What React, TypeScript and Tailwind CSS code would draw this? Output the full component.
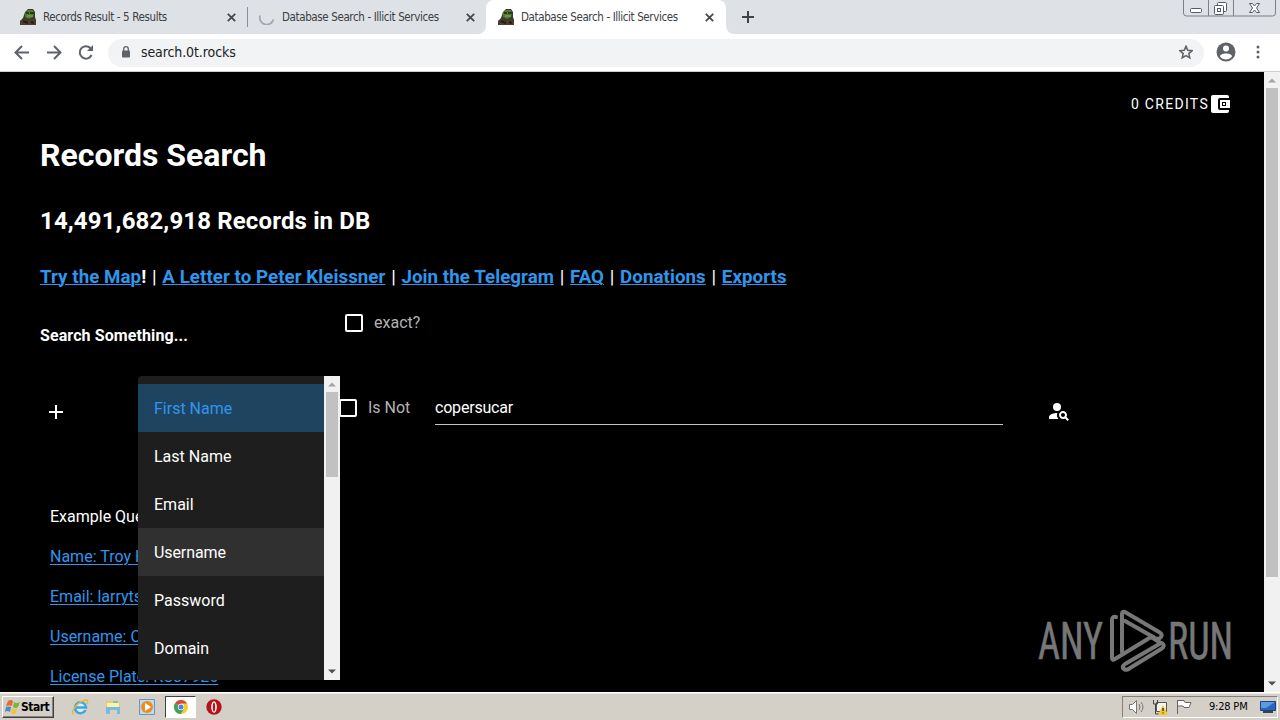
import type { ReactNode } from "react";

const UI_FONT = "font-['DejaVu_Sans_Condensed','DejaVu_Sans',sans-serif] [font-stretch:condensed]";

const NAV_LINKS = ["A Letter to Peter Kleissner", "Join the Telegram", "FAQ", "Donations", "Exports"];
const FIELDS = ["First Name", "Last Name", "Email", "Username", "Password", "Domain"];
const EXAMPLES = ["Name: Troy Hunt", "Email: larrytsantos", "Username: Chris", "License Plate: KCJ7926"];

function FrogIcon() {
	return (
		<svg className="w-4 h-4 shrink-0" viewBox="0 0 16 16">
			<path d="M0 16V12L3 9 5 3 8 0h5l2 3v5l1 3v5z" fill="#3b3a28" />
			<path d="M5 4 8 1h5l1 3-1 4-4 2-4-2z" fill="#4d7a35" />
			<path d="M6 4h3M10 4h4" stroke="#16270f" strokeWidth="1.4" />
			<path d="M7 7h6" stroke="#98a94e" />
			<path d="M0 16v-4l4-2 4 2 5-2 3 3v3z" fill="#513c29" />
			<path d="M3 12l5 2M11 13l3 1" stroke="#1d211b" strokeWidth="2" />
		</svg>
	);
}

function CloseIcon() {
	return (
		<svg className="w-[9px] h-[9px] shrink-0" viewBox="0 0 9 9">
			<path d="M.8.8 8.2 8.2M8.2.8.8 8.2" stroke="#45494d" strokeWidth="1.8" />
		</svg>
	);
}

function Tab({ title, icon, active }: { title: string; icon: ReactNode; active?: boolean }) {
	return (
		<div
			className={
				active
					? "relative w-[240px] h-[34px] flex items-center pl-3 pr-[12px] bg-white rounded-t-lg"
					: "w-[239px] h-[34px] flex items-center pl-3 pr-[11px]"
			}
		>
			{active && (
				<>
					<svg className="absolute -left-2 bottom-0 w-2 h-2" viewBox="0 0 8 8"><path d="M8 0v8H0a8 8 0 0 0 8-8" fill="#fff" /></svg>
					<svg className="absolute -right-2 bottom-0 w-2 h-2" viewBox="0 0 8 8"><path d="M0 0v8h8a8 8 0 0 1-8-8" fill="#fff" /></svg>
				</>
			)}
			{icon}
			<span className="ml-[7px] pt-0.5 flex-1 whitespace-nowrap text-[11.5px] tracking-[-0.38px] text-[#3c4043]">{title}</span>
			<CloseIcon />
		</div>
	);
}

function WindowButtons() {
	return (
		<svg className="w-[94px] h-[18px]" viewBox="0 0 94 18" fill="none">
			<path d="M.5 0v13q0 3 3 3h86q3 0 3-3V0M25.500 0v16M50.500 0v16" stroke="#7c8088" />
			<rect x="7.500" y="8.500" width="11" height="4" rx="1" fill="#fff" stroke="#555b66" />
			<rect x="34.500" y="2.500" width="9" height="9" rx="1" fill="#fff" stroke="#555b66" />
			<rect x="31.500" y="5.500" width="9" height="9" rx="1" fill="#fff" stroke="#555b66" />
			<rect x="34.500" y="8.500" width="3" height="3" stroke="#555b66" />
			<path d="M66.500 3.500h3l2 2.500 2-2.500h3l-3 4.500 3 4.500h-3l-2-2.500-2 2.500h-3l3-4.500z" fill="#fff" stroke="#555b66" />
		</svg>
	);
}

function TabStrip() {
	return (
		<div className="h-[34px] flex bg-[#dee1e6]">
			<div className="flex pl-2 items-start">
				<Tab title="Records Result - 5 Results" icon={<FrogIcon />} />
				<div className="w-px h-5 mt-[7px] bg-[#8b8f95] -mr-px" />
				<Tab
					title="Database Search - Illicit Services"
					icon={
						<svg className="w-4 h-4 shrink-0" viewBox="0 0 16 16" fill="none">
							<path d="M1 6.500a7 7 0 0 0 13.500 4" stroke="#a3a7ad" strokeWidth="1.800" />
						</svg>
					}
				/>
				<Tab title="Database Search - Illicit Services" icon={<FrogIcon />} active />
			</div>
			<svg className="w-3 h-3 mt-[11px] ml-4" viewBox="0 0 12 12">
				<path d="M6 0v12M0 6h12" stroke="#3f4347" strokeWidth="2" />
			</svg>
			<div className="flex-1" />
			<div className="w-[97px]">
				<WindowButtons />
			</div>
		</div>
	);
}

function Toolbar() {
	return (
		<div className="h-[38px] flex items-center bg-white border-b border-[#c9cccf] pl-[14px] text-[#5f6368]">
			<svg className="w-4 h-4" viewBox="0 0 16 16" fill="none" stroke="currentColor" strokeWidth="2">
				<path d="M15 7.500H2M8 1 1.500 7.500 8 14" />
			</svg>
			<svg className="w-4 h-4 ml-4" viewBox="0 0 16 16" fill="none" stroke="currentColor" strokeWidth="2">
				<path d="M1 7.500h13M8 1 14.500 7.500 8 14" />
			</svg>
			<svg className="w-4 h-4 ml-4" viewBox="0 0 16 16" fill="none" stroke="currentColor" strokeWidth="2">
				<path d="M13.600 10A6.200 6.200 0 1 1 12.500 3.200L14 5" />
				<path d="M15 0v6H9z" fill="currentColor" stroke="none" />
			</svg>
			<div className="ml-[14px] w-[1096px] h-7 rounded-full bg-[#f1f3f4] flex items-center pl-[13px] pr-[11px]">
				<svg className="w-[10px] h-3 -mt-0.5" viewBox="0 0 10 12">
					<rect x="1" y="4.500" width="8" height="7" rx="1" fill="currentColor" />
					<path d="M2.700 5V3a2.300 2.300 0 0 1 4.600 0v2" fill="none" stroke="currentColor" strokeWidth="1.300" />
				</svg>
				<span className="ml-[10px] flex-1 text-[14px] tracking-[-0.1px] text-[#202124]">search.0t.rocks</span>
				<svg className="w-[14px] h-[14px] -mt-0.5" viewBox="0 0 24 24" fill="none" stroke="currentColor" strokeWidth="2.600">
					<path d="m12 2 3 7 7.500.7-5.700 5 1.700 7.300-6.500-3.900L5.500 22l1.700-7.300-5.700-5L9 9z" />
				</svg>
			</div>
			<svg className="w-[20px] h-[20px] ml-3 -mt-0.5" viewBox="0 0 20 20">
				<circle cx="10" cy="10" r="9.500" fill="currentColor" />
				<circle cx="10" cy="6.500" r="3" fill="#fff" />
				<path d="M4 14.500c0-4 12-4 12 0-3 4-9 4-12 0" fill="#fff" />
			</svg>
			<svg className="w-4 h-4 ml-[14px] -mt-0.5" viewBox="0 0 16 16" fill="currentColor">
				<circle cx="8" cy="3" r="1.500" />
				<circle cx="8" cy="8" r="1.500" />
				<circle cx="8" cy="13" r="1.500" />
			</svg>
		</div>
	);
}

function ScrollArrow({ down }: { down?: boolean }) {
	return (
		<svg className="w-4 h-4 shrink-0" viewBox="0 0 16 16">
			{down ? <path d="M4 5.500h8l-4 4z" fill="#505050" /> : <path d="M4 10.500h8l-4-4z" fill="#a3a3a3" />}
		</svg>
	);
}

function FieldMenu() {
	return (
		<div className="absolute left-[138px] top-[304px] w-[202px] h-[304px] flex bg-[#1e1e1e] rounded-tl overflow-hidden">
			<div className="flex-1 pt-2">
				{FIELDS.map((field) => (
					<div
						key={field}
						className={
							field === "First Name"
								? "h-12 flex items-center pl-4 pt-px text-base bg-[#1f4460] text-[#2f96ed]"
								: field === "Username"
									? "h-12 flex items-center pl-4 pt-px text-base tracking-[-0.1px] bg-[#303030]"
									: "h-12 flex items-center pl-4 pt-px text-base"
						}
					>
						{field}
					</div>
				))}
			</div>
			<div className="w-4 flex flex-col bg-[#f1f1f1]">
				<ScrollArrow />
				<div className="h-[85px] mx-0.5 bg-[#c1c1c1]" />
				<div className="flex-1" />
				<ScrollArrow down />
			</div>
		</div>
	);
}

function Checkbox() {
	return <div className="w-[18px] h-[18px] border-2 border-white rounded-[2px]" />;
}

function Watermark() {
	return (
		<svg className="absolute left-[1036px] top-[534px] w-[200px] h-[70px]" viewBox="0 0 200 70" fill="none">
			<g fill="#777" stroke="#777" strokeWidth=".6" className="font-[Roboto,sans-serif] [font-stretch:condensed]" fontSize="52">
				<text x="2" y="53" textLength="65" lengthAdjust="spacingAndGlyphs">ANY</text>
				<text x="132" y="53" textLength="65" lengthAdjust="spacingAndGlyphs">RUN</text>
			</g>
			<g stroke="#777" strokeWidth="4" strokeLinejoin="round" strokeLinecap="round">
				<path d="M86 46V8q0-3 3-2l34 20q4 2 2 5t-6 1L89 15" />
				<path d="M80 11q-4-1-4 3v38q0 3 3 1l36-22" />
				<path d="M115 31l10 6-36 21q-4 3-1 5t6-1l31-19q5-3 1-6" />
			</g>
		</svg>
	);
}

function Page() {
	return (
		<div className="relative h-[620px] flex bg-black text-white font-[Roboto,sans-serif] [font-stretch:normal] overflow-hidden">
			<main className="w-[1264px] pl-10">
				<div className="h-[62px] pt-6 pr-[33px] flex justify-end">
					<div className="h-4 flex items-center text-[14px] tracking-[1.3px]">
						0 CREDITS
						<svg className="w-5 h-[18px] ml-[2px]" viewBox="0 0 20 18">
							<path d="M2 0h14q2 0 2 2v14q0 2-2 2H2q-2 0-2-2V2q0-2 2-2" fill="#fff" />
							<path d="M20 3H9Q7 3 7 5v8q0 2 2 2h11" fill="#000" />
							<path d="M9 5h10v8H9z" fill="#fff" />
							<path d="M11 7h4v4h-4z" fill="#000" />
							<path d="M12 8h2v2h-2z" fill="#fff" />
						</svg>
					</div>
				</div>
				<h1 className="h-[42px] leading-[42px] text-[32px] font-bold">Records Search</h1>
				<h2 className="mt-[29px] h-8 leading-8 text-2xl tracking-[0.14px] font-bold">14,491,682,918 Records in DB</h2>
				<div className="mt-6 h-8 flex items-center text-[18.72px] tracking-[0.06px] leading-8 whitespace-pre">
					<a className="font-bold text-[#2f96ed] underline decoration-1 underline-offset-1">Try the Map</a>
					<b>!</b>
					{NAV_LINKS.map((link) => (
						<span key={link}>
							<span className="mx-px">{" | "}</span>
							<a className="font-bold text-[#2f96ed] underline decoration-1 underline-offset-1">{link}</a>
						</span>
					))}
				</div>
				<div className="h-[83px] flex">
					<div className="w-[305px] pt-[31px] text-base leading-6 tracking-[0.1px] font-bold">Search Something...</div>
					<div className="h-[18px] mt-[21px] flex items-center gap-[11px] text-base text-[#b3b3b3]">
						<Checkbox />
						exact?
					</div>
				</div>
				<div className="h-[130px] flex items-start">
					<svg className="w-[14px] h-[14px] mt-[29px] ml-[9px]" viewBox="0 0 14 14">
						<path d="M7 0v14M0 7h14" stroke="#fff" strokeWidth="2" />
					</svg>
					<div className="h-[18px] mt-[23px] ml-[276px] flex items-center gap-[11px] text-base text-[#b3b3b3]">
						<Checkbox />
						<span className="w-[67px]">Is Not</span>
					</div>
					<div className="w-[568px] h-[49px] pt-5 border-b border-[#c4c4c4] text-base leading-6 tracking-[-0.2px]">copersucar</div>
					<svg className="w-6 h-6 mt-[23px] ml-11" viewBox="0 0 24 24" fill="#fff">
						<circle cx="10" cy="8" r="4" />
						<path d="M10.350 14.010C7.620 13.910 2 15.270 2 18v2h9.540c-2.470-2.760-1.230-5.890-1.190-5.990M19.430 18.020c.36-.59.57-1.280.57-2.020 0-2.210-1.790-4-4-4s-4 1.790-4 4 1.790 4 4 4c.74 0 1.430-.22 2.020-.57L20.590 22 22 20.590zM16 18c-1.100 0-2-.9-2-2s.9-2 2-2 2 .9 2 2-.9 2-2 2" />
					</svg>
				</div>
				<div className="ml-[10px] flex flex-col items-start text-base leading-10 whitespace-nowrap">
					<div className="h-10 -mt-[9px]">Example Queries</div>
					{EXAMPLES.map((example) => (
						<a key={example} className="h-10 text-[#2f96ed] underline decoration-1 underline-offset-2">{example}</a>
					))}
				</div>
			</main>
			<div className="w-4 flex flex-col bg-[#f1f1f1]">
				<ScrollArrow />
				<div className="h-[489px] mx-0.5 bg-[#c1c1c1]" />
				<div className="flex-1" />
				<ScrollArrow down />
			</div>
			<FieldMenu />
			<Watermark />
		</div>
	);
}

function WindowsFlag() {
	return (
		<svg className="w-4 h-4" viewBox="0 0 16 16">
			<path d="M3 2q3-2 5 0L7 7Q4 6 1 7z" fill="#e36b35" />
			<path d="M9 3q3 2 6 0l-2 5q-3 2-5 0z" fill="#78b643" />
			<path d="M1 8q3-1 5 0l-1 5q-3-2-5 0z" fill="#4788d2" />
			<path d="M7 9q3 2 5 0l-1 5q-3 2-5 0z" fill="#f3c23b" />
		</svg>
	);
}

function Taskbar() {
	return (
		<div className="h-7 flex items-center bg-[#d4d0c8] border-t border-white pt-px pl-0.5 shadow-[inset_0_1px_0_#ece9e3]">
			<div className="w-[52px] h-[22px] flex items-center pl-[2px] border border-t-white border-l-white border-r-[#404040] border-b-[#404040] shadow-[inset_-1px_-1px_0_#87837d] text-[12px] font-bold tracking-[-0.5px] text-black">
				<WindowsFlag />
				Start
			</div>
			<svg className="w-[18px] h-[18px] ml-[17px]" viewBox="0 0 18 18" fill="none">
				<ellipse cx="9.500" cy="9.500" rx="5" ry="5.500" fill="#d9effa" />
				<path d="M14.500 12A5.500 5.500 0 1 1 15 9.500H5" stroke="#42a5dd" strokeWidth="2.500" />
				<path d="M3 16C-2 15 7 3 15 2q3 0 1 4" stroke="#e5b934" strokeWidth="1.300" />
			</svg>
			<svg className="w-4 h-4 ml-4" viewBox="0 0 16 16">
				<path d="M1 2h5l1 2h8v5H1z" fill="#e8cd6c" />
				<path d="M2 4h12v5H2z" fill="#fff0ac" />
				<path d="M1 8h14v7h-3v-4H5v4H1z" fill="#77bddb" />
				<path d="M8 3h5" stroke="#58a861" />
			</svg>
			<svg className="w-4 h-4 ml-[18px]" viewBox="0 0 16 16">
				<path d="M.5.500h15v15H.5z" fill="#c0d9ef" stroke="#6595c5" />
				<circle cx="8" cy="8" r="6" fill="#ed8b1c" />
				<path d="M6 4v8l6-4z" fill="#fff" />
			</svg>
			<div className="w-[31px] h-[22px] ml-[10px] bg-white border border-t-[#404040] border-l-[#404040] border-r-white border-b-white flex items-center justify-center">
				<svg className="w-[14px] h-[14px]" viewBox="0 0 14 14">
					<circle cx="7" cy="7" r="7" fill="#f5c932" />
					<path d="M7 7 .900 3.500A7 7 0 0 1 13.100 3.500H7z" fill="#dd4938" />
					<path d="M7 7 .900 3.500A7 7 0 0 0 6.500 14L10 9z" fill="#3ba45a" />
					<circle cx="7" cy="7" r="3.200" fill="#fff" />
					<circle cx="7" cy="7" r="2.500" fill="#4584df" />
				</svg>
			</div>
			<svg className="w-4 h-4 ml-[10px]" viewBox="0 0 16 16">
				<circle cx="8" cy="8" r="7.700" fill="#b5131a" />
				<ellipse cx="8" cy="8" rx="2.800" ry="5.700" fill="#fff" />
				<ellipse cx="8" cy="8" rx="1.200" ry="4.500" fill="#b5131a" />
			</svg>
			<div className="flex-1" />
			<div className="w-[156px] h-[22px] mr-0.5 flex items-center border border-t-[#808080] border-l-[#808080] border-r-white border-b-white text-black">
				<svg className="w-[18px] h-4 ml-[5px]" viewBox="0 0 18 16" fill="#fff" stroke="#777">
					<path d="M1.500 5.500h3l4-4v13l-4-4h-3z" />
					<path d="M11 5q2 3 0 6M13 3q4 5 0 10" fill="none" />
				</svg>
				<svg className="w-4 h-4 ml-[6px]" viewBox="0 0 16 16">
					<path d="M4.500 3.500h10v9h-10z" fill="#f3f3f0" stroke="#555" />
					<path d="M1.500 1v4h4V1M3.500 5v10h5" fill="none" stroke="#444" />
					<path d="m11 6 5 10H6z" fill="#f6c829" />
					<path d="M11 9v3M11 13.500v1" stroke="#222" strokeWidth="1.300" />
				</svg>
				<svg className="w-4 h-4 ml-[8px]" viewBox="0 0 16 16" fill="#fff" stroke="#666">
					<path d="M1.500 1v14M2 1.500h6q0 2 2 2h5l-2 5H8L7 7H2" />
				</svg>
				<span className="ml-[17px] w-10 pt-px whitespace-nowrap text-[11px] tracking-[-0.2px]">9:28 PM</span>
				<svg className="w-4 h-[14px] ml-[11px]" viewBox="0 0 16 14">
					<path d="M.5 1.500h15v9H.5z" fill="#2867bd" stroke="#1f427c" />
					<path d="M1 2h14L6 8H1z" fill="#5d9ae0" />
					<path d="M3 12h10" stroke="#345" strokeWidth="2" />
				</svg>
			</div>
		</div>
	);
}

function App() {
	return (
		<div className={`w-[1280px] h-[720px] overflow-hidden flex flex-col ${UI_FONT}`}>
			<TabStrip />
			<Toolbar />
			<Page />
			<Taskbar />
		</div>
	);
}

export default App;
